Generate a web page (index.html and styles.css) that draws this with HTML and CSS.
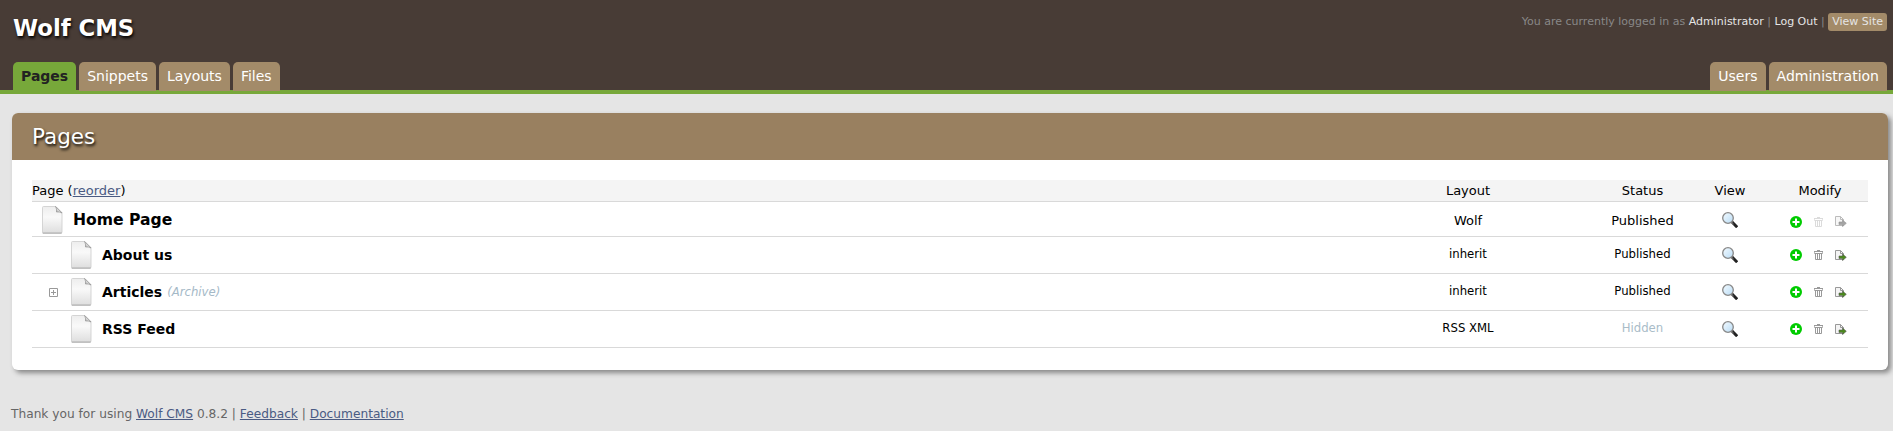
FILE: index.html
```html
<!DOCTYPE html>
<html lang="en">
<head>
<meta charset="utf-8">
<title>Wolf CMS - Pages</title>
<link rel="stylesheet" href="styles.css">
</head>
<body>
<svg class="defs" width="0" height="0" aria-hidden="true">
  <defs>
    <linearGradient id="paper" x1="0" y1="0" x2="0" y2="1"><stop offset="0" stop-color="#ededed"/><stop offset=".4" stop-color="#f9f9f9"/><stop offset="1" stop-color="#dedede"/></linearGradient>
    <linearGradient id="fold" x1="0" y1="1" x2="1" y2="0"><stop offset="0" stop-color="#9a9a9a"/><stop offset=".45" stop-color="#dcdcdc"/><stop offset="1" stop-color="#f4f4f4"/></linearGradient>
    <linearGradient id="glass" x1="0" y1="0" x2="1" y2="1"><stop offset="0" stop-color="#f4fbff"/><stop offset="1" stop-color="#b9dcf6"/></linearGradient>
    <symbol id="file" viewBox="0 0 24 30">
      <path d="M3 28.500H21" stroke="#999" stroke-opacity=".5"/>
      <path d="M2.500 2.500Q2.500 1.500 3.500 1.500H16L22 7.500V27Q22 28 21 28H3.500Q2.500 28 2.500 27Z" fill="url(#paper)" stroke="#d0d0d0" stroke-width=".9"/>
      <path d="M2.500 28H22" stroke="#b4b4b4"/>
      <path d="M15.500 1.500Q17 4 16.500 7Q19.500 6.500 22 8Z" fill="url(#fold)" stroke="#8a8a8a" stroke-width=".6"/>
    </symbol>
    <symbol id="lens" viewBox="0 0 16 16">
      <path d="M9.800 9.800L15.200 15.200" stroke="#222" stroke-width="3"/>
      <path d="M9.300 9.900L11.500 12" stroke="#999" stroke-width="1"/>
      <circle cx="6" cy="6" r="5.300" fill="url(#glass)" stroke="#888" stroke-width="1.300"/>
    </symbol>
    <symbol id="add" viewBox="0 0 12 12">
      <circle cx="6" cy="6" r="6" fill="#0c0"/>
      <path d="M6 2.500V9.500M2.500 6H9.500" stroke="#fff" stroke-width="2"/>
    </symbol>
    <symbol id="trash" viewBox="0 0 9 10">
      <path d="M0 1.500H9M3 .5H6M.5 3.500H8.500M1.500 3.500V9.500H7.500V3.500M3.500 4V9M5.500 4V9" fill="none" stroke="#999"/>
      <path d="M.5 1.500V3.500M8.500 1.500V3.500" stroke="#999" stroke-width=".7"/>
    </symbol>
    <symbol id="copy" viewBox="0 0 12 11">
      <path d="M.5 .5H5.500L8.500 3.500V9.500H.5Z" fill="#f4f4f4" stroke="#999"/>
      <path d="M5.500 .5V3.500H8.500" fill="none" stroke="#999"/>
      <path class="arrow" d="M4 6H7.500V4L11.300 7.300L7.500 10.600V8.600H4Z"/>
    </symbol>
  </defs>
</svg>

<header class="header">
  <div class="header-top">
    <div class="site-title">Wolf CMS</div>
    <div class="site-links">You are currently logged in as <a href="#">Administrator</a> | <a href="#">Log Out</a> | <a class="view-site" href="#">View Site</a></div>
  </div>
  <nav class="tabs">
    <a class="tab current" href="#">Pages</a>
    <a class="tab" href="#">Snippets</a>
    <a class="tab" href="#">Layouts</a>
    <a class="tab" href="#">Files</a>
    <a class="tab right" href="#">Users</a>
    <a class="tab" href="#">Administration</a>
  </nav>
</header>

<main class="panel">
  <h1 class="panel-title">Pages</h1>
  <div class="site-map">
    <div class="row head">
      <div class="page">Page (<a href="#">reorder</a>)</div>
      <div>Layout</div><div>Status</div><div>View</div><div>Modify</div>
    </div>
    <div class="row root">
      <div class="page"><svg class="file"><use href="#file"/></svg><b>Home Page</b></div>
      <div class="text">Wolf</div><div class="text">Published</div>
      <div><svg class="lens"><use href="#lens"/></svg></div>
      <div class="modify disabled"><svg class="add"><use href="#add"/></svg><svg class="trash"><use href="#trash"/></svg><svg class="copy"><use href="#copy"/></svg></div>
    </div>
    <div class="row">
      <div class="page child"><span class="expander"></span><svg class="file"><use href="#file"/></svg><b>About us</b></div>
      <div class="label">inherit</div><div class="label">Published</div>
      <div><svg class="lens"><use href="#lens"/></svg></div>
      <div class="modify"><svg class="add"><use href="#add"/></svg><svg class="trash"><use href="#trash"/></svg><svg class="copy"><use href="#copy"/></svg></div>
    </div>
    <div class="row">
      <div class="page child"><span class="expander"><svg width="9" height="9" viewBox="0 0 9 9"><path d="M.5 .5H8.500V8.500H.5ZM4.500 2V7M2 4.500H7" fill="none" stroke="#999"/></svg></span><svg class="file"><use href="#file"/></svg><b>Articles</b><em>(Archive)</em></div>
      <div class="label">inherit</div><div class="label">Published</div>
      <div><svg class="lens"><use href="#lens"/></svg></div>
      <div class="modify"><svg class="add"><use href="#add"/></svg><svg class="trash"><use href="#trash"/></svg><svg class="copy"><use href="#copy"/></svg></div>
    </div>
    <div class="row">
      <div class="page child"><span class="expander"></span><svg class="file"><use href="#file"/></svg><b>RSS Feed</b></div>
      <div class="label">RSS XML</div><div class="label hidden-status">Hidden</div>
      <div><svg class="lens"><use href="#lens"/></svg></div>
      <div class="modify"><svg class="add"><use href="#add"/></svg><svg class="trash"><use href="#trash"/></svg><svg class="copy"><use href="#copy"/></svg></div>
    </div>
  </div>
</main>

<footer class="footer">Thank you for using <a href="#">Wolf CMS</a> 0.8.2 | <a href="#">Feedback</a> | <a href="#">Documentation</a></footer>
</body>
</html>
```
FILE: styles.css
```css
* { box-sizing: border-box; }
body {
  margin: 0;
  background: #e5e5e5;
  color: #000;
  font: 13px/16px "DejaVu Sans", Verdana, sans-serif;
}
a { color: #4a5b83; }
.defs { display: block; height: 0; }
svg { display: block; flex: none; }

.header {
  height: 94px;
  background: #483c36;
  border-bottom: 4px solid #77a83a;
  padding: 0 6px 0 13px;
}
.header-top { display: flex; justify-content: space-between; height: 62px; }
.site-title {
  padding-top: 14px;
  font-size: 22.75px;
  line-height: 28px;
  font-weight: bold;
  color: #fff;
  text-shadow: 1px 2px 3px #000;
}
.site-links { padding-top: 13px; font-size: 11px; line-height: 18px; color: #888; }
.site-links a { color: #e5e5e5; text-decoration: none; }
.site-links .view-site {
  display: inline-block;
  height: 18px;
  padding: 0 4px;
  border-radius: 3px;
  background: #a38b69;
  color: #e5e5e5;
}
.tabs { display: flex; gap: 3px; }
.tab {
  height: 29px;
  padding: 0 8px;
  border-radius: 5px 5px 0 0;
  background: #a38b69;
  color: #fff;
  font-size: 14px;
  line-height: 28px;
  text-decoration: none;
}
.tab.current { background: #77a83a; color: #222; font-weight: bold; }
.tab.right { margin-left: auto; }

.panel {
  margin: 19px 5px 0 12px;
  height: 257px;
  border-radius: 6px;
  background: #fff;
  box-shadow: 3px 3px 5px #888;
}
.panel-title {
  margin: 0;
  height: 47px;
  padding-left: 20px;
  border-radius: 6px 6px 0 0;
  background: #998060;
  color: #fff;
  font-size: 21.5px;
  font-weight: normal;
  line-height: 48px;
  text-shadow: 1px 2px 3px #000;
}
.site-map { margin: 20px 20px 0; }
.row {
  display: grid;
  grid-template-columns: 1fr 258px 91px 84px 96px;
  height: 37px;
  align-items: center;
  justify-items: center;
  border-bottom: 1px solid #d9d9d9;
}
.row .page { justify-self: start; display: flex; align-items: center; }
.row.head { height: 22px; background: #f4f4f4; }
.row.head .page { white-space: pre; }
.row.root { height: 35px; padding-top: 2px; }
.root .page { padding-left: 8px; }
.root .text { padding-top: 2px; }
.page b { font-size: 14px; margin-left: 9px; }
.root b { font-size: 15.6px; }
.page em { font-size: 11.7px; color: #a5b9c7; margin-left: 5px; }
.file { width: 24px; height: 30px; }
.expander { width: 37px; padding-left: 17px; }
.label { font-size: 11.7px; padding-bottom: 3px; }
.hidden-status { color: #a9bcc8; }
.lens { width: 16px; height: 16px; }
.modify { display: flex; align-items: center; padding-right: 4px; }
.disabled { padding-top: 3px; }
.add { width: 12px; height: 12px; }
.trash { width: 9px; height: 10px; margin-left: 12px; }
.copy { width: 12px; height: 11px; margin-left: 12px; }
.arrow { fill: #4b8a1c; stroke: #555; stroke-width: .6; }
.disabled .trash { opacity: .35; }
.disabled .copy { opacity: .65; filter: grayscale(1); }

.footer { margin: 36px 0 0 11px; font-size: 12.2px; line-height: 16px; color: #666; }
```
